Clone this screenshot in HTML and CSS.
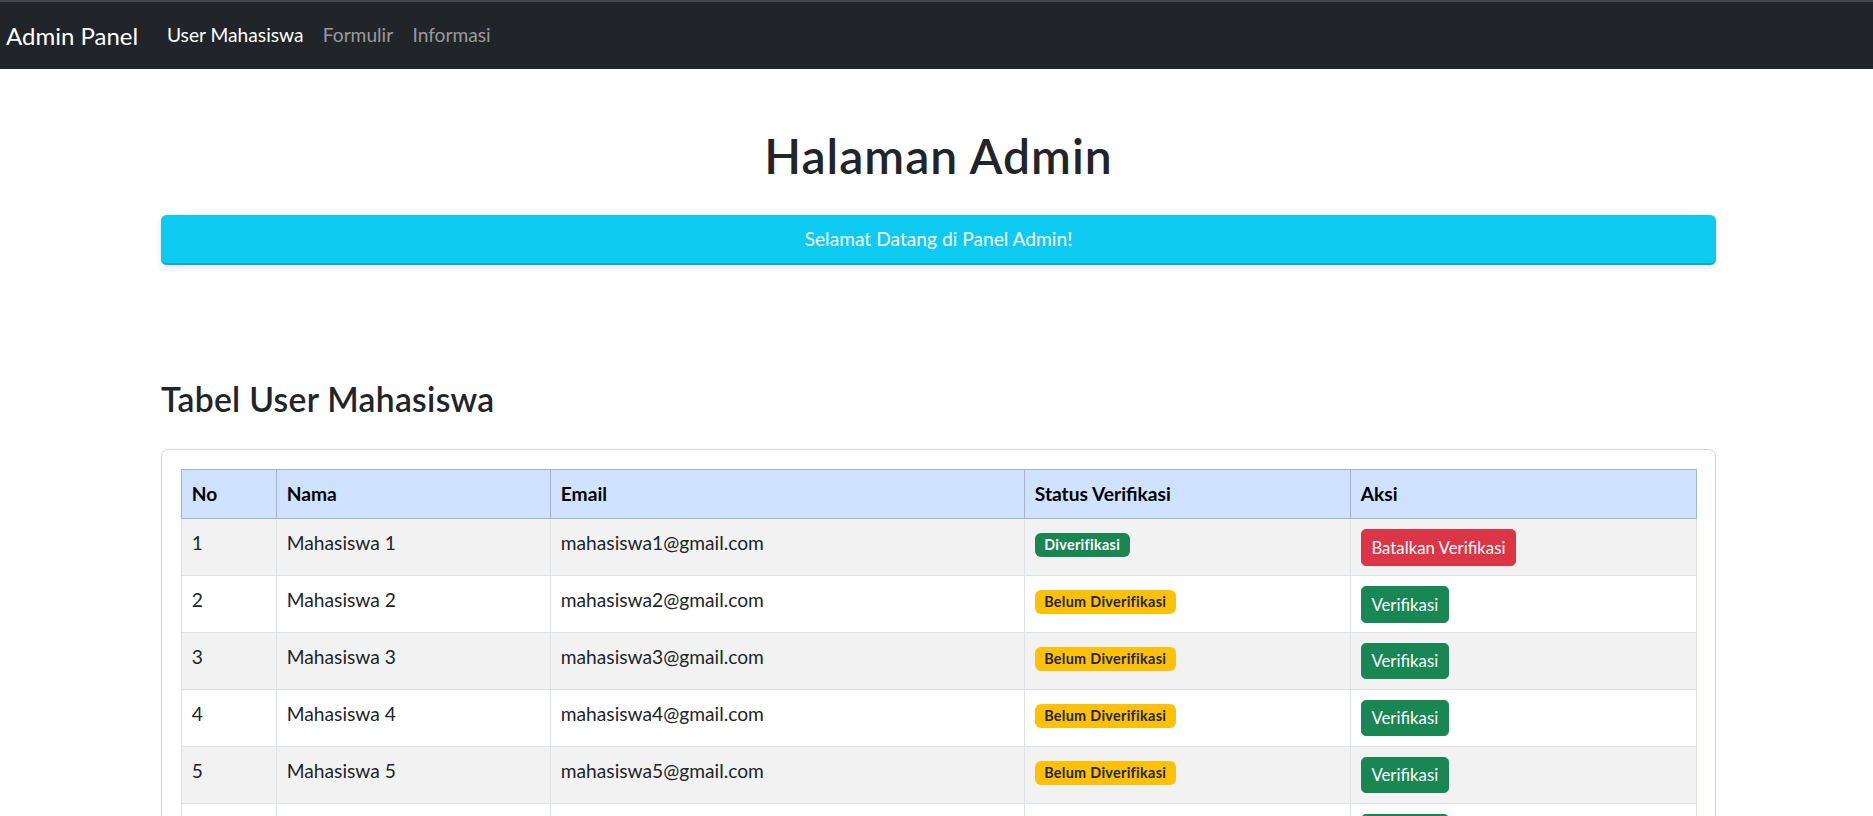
FILE: index.html
```html
<!DOCTYPE html>
<html lang="id">
<head>
<meta charset="utf-8">
<title>Admin Panel</title>
<link rel="stylesheet" href="styles.css">
</head>
<body>
<nav class="navbar">
  <a class="brand" href="#">Admin Panel</a>
  <ul class="nav">
    <li><a class="nav-link active" href="#">User Mahasiswa</a></li>
    <li><a class="nav-link" href="#">Formulir</a></li>
    <li><a class="nav-link" href="#">Informasi</a></li>
  </ul>
</nav>

<main class="container">
  <h1 class="page-title">Halaman Admin</h1>
  <div class="alert">Selamat Datang di Panel Admin!</div>

  <section class="section">
    <h3 class="section-title">Tabel User Mahasiswa</h3>
    <div class="card">
      <table class="table">
        <colgroup>
          <col class="c-no"><col class="c-nama"><col class="c-email"><col class="c-status"><col class="c-aksi">
        </colgroup>
        <thead>
          <tr><th>No</th><th>Nama</th><th>Email</th><th>Status Verifikasi</th><th>Aksi</th></tr>
        </thead>
        <tbody>
          <tr><td>1</td><td>Mahasiswa 1</td><td>mahasiswa1@gmail.com</td><td><span class="badge badge-success">Diverifikasi</span></td><td><button class="btn btn-danger">Batalkan Verifikasi</button></td></tr>
          <tr><td>2</td><td>Mahasiswa 2</td><td>mahasiswa2@gmail.com</td><td><span class="badge badge-warning">Belum Diverifikasi</span></td><td><button class="btn btn-success">Verifikasi</button></td></tr>
          <tr><td>3</td><td>Mahasiswa 3</td><td>mahasiswa3@gmail.com</td><td><span class="badge badge-warning">Belum Diverifikasi</span></td><td><button class="btn btn-success">Verifikasi</button></td></tr>
          <tr><td>4</td><td>Mahasiswa 4</td><td>mahasiswa4@gmail.com</td><td><span class="badge badge-warning">Belum Diverifikasi</span></td><td><button class="btn btn-success">Verifikasi</button></td></tr>
          <tr><td>5</td><td>Mahasiswa 5</td><td>mahasiswa5@gmail.com</td><td><span class="badge badge-warning">Belum Diverifikasi</span></td><td><button class="btn btn-success">Verifikasi</button></td></tr>
          <tr><td>6</td><td>Mahasiswa 6</td><td>mahasiswa6@gmail.com</td><td><span class="badge badge-warning">Belum Diverifikasi</span></td><td><button class="btn btn-success">Verifikasi</button></td></tr>
        </tbody>
      </table>
    </div>
  </section>
</main>
</body>
</html>
```
FILE: styles.css
```css
html { scrollbar-width: none; }
::-webkit-scrollbar { width: 0; height: 0; }

* { box-sizing: border-box; }

body {
  margin: 0;
  font-family: Lato, "Open Sans", "Noto Sans", sans-serif;
  font-size: 19.2px;
  line-height: 1.5;
  color: #212529;
  background: #fff;
}

/* Navbar */
.navbar {
  display: flex;
  align-items: center;
  height: 69px;
  padding-left: 6px;
  background: #212529;
  border-top: 2px solid #45484b;
}
.brand {
  font-size: 24px;
  color: #fff;
  text-decoration: none;
  margin-right: 19.2px;
  white-space: nowrap;
}
.nav {
  display: flex;
  list-style: none;
  margin: 0;
  padding: 0;
}
.nav-link {
  display: block;
  padding: 9.6px;
  color: rgba(255, 255, 255, 0.55);
  text-decoration: none;
}
.nav-link.active { color: #fff; }

/* Content */
.container {
  width: 1555px;
  margin: 0 0 0 calc(50% - 775.5px);
  padding-top: 57.6px;
}
.page-title {
  margin: 0 0 30.8px;
  text-align: center;
  font-size: 48px;
  font-weight: 600;
  line-height: 1.2;
  letter-spacing: 1px;
}
.alert {
  padding: 9.6px;
  text-align: center;
  color: #fff;
  background: #0dcaf0;
  border-radius: 6px;
  border-bottom: 2px solid #0aaccc;
  box-shadow: 0 0 1px rgba(0, 0, 0, 0.25), 0 3px 6px rgba(0, 0, 0, 0.1);
}

.section { margin-top: 114px; }
.section-title {
  margin: 0 0 29.4px;
  font-size: 33.6px;
  font-weight: 600;
  line-height: 1.2;
  letter-spacing: 0.3px;
}
.card {
  padding: 19.5px 19.2px 19.2px;
  border: 1px solid #d6d6d6;
  border-radius: 7px;
}

/* Table */
.table {
  width: 100%;
  border-collapse: collapse;
  table-layout: fixed;
}
.c-no { width: 95px; }
.c-nama { width: 274px; }
.c-email { width: 474px; }
.c-status { width: 326px; }
.c-aksi { width: 346px; }

.table th,
.table td {
  padding: 9.6px;
  text-align: left;
  vertical-align: top;
}
.table th {
  color: #000;
  font-weight: 700;
  background: #cfe2ff;
  border: 1px solid #a6b5cc;
}
.table td {
  border: 1px solid #dee2e6;
}
.table tbody tr:nth-child(odd) td { background: #f2f2f2; }

.badge {
  display: inline-block;
  padding: 5px 9.4px;
  font-size: 14.4px;
  font-weight: 700;
  line-height: 1;
  letter-spacing: 0.3px;
  border-radius: 6px;
  white-space: nowrap;
}
.badge-success { background: #198754; color: #fff; }
.badge-warning { background: #ffc107; color: #212529; }

.btn {
  display: inline-block;
  padding: 4.8px 9.6px;
  font-family: inherit;
  font-size: 16.8px;
  line-height: 1.5;
  color: #fff;
  border: 1px solid transparent;
  border-radius: 4.8px;
  cursor: pointer;
}
.btn-danger { background: #dc3545; border-color: #dc3545; }
.btn-success { background: #198754; border-color: #198754; }
```
